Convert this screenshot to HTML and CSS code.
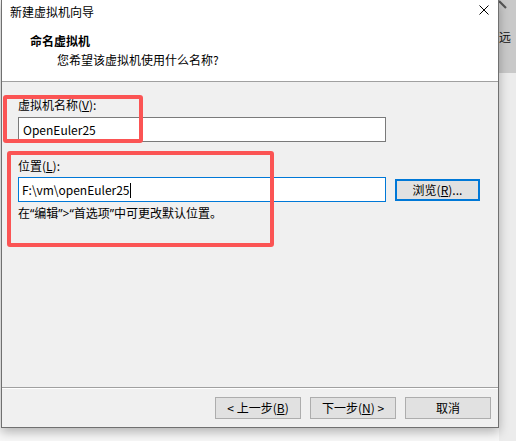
FILE: index.html
```html
<!DOCTYPE html>
<html lang="zh-CN">
<head>
<meta charset="utf-8">
<title>新建虚拟机向导</title>
<link rel="stylesheet" href="styles.css">
</head>
<body>
<div class="screen">
  <div class="dialog">
    <div class="header">
      <div class="titlebar">
        <span class="title">新建虚拟机向导</span>
        <svg class="close" width="10" height="10" viewBox="0 0 10 10"><path d="M0.5 0.5 L9.5 9.5 M9.5 0.5 L0.5 9.5" stroke="#000" stroke-width="1" fill="none"/></svg>
      </div>
      <div class="heading">命名虚拟机</div>
      <div class="subtitle">您希望该虚拟机使用什么名称?</div>
    </div>
    <div class="body">
      <div class="label">虚拟机名称(<u>V</u>):</div>
      <div class="field name-field">OpenEuler25</div>
      <div class="label label-loc">位置(<u>L</u>):</div>
      <div class="loc-row">
        <div class="field focused">F:\vm\openEuler25<span class="caret"></span></div>
        <div class="btn browse">浏览(<u>R</u>)...</div>
      </div>
      <div class="hint">在“编辑”&gt;“首选项”中可更改默认位置。</div>
    </div>
    <div class="separator"></div>
    <div class="footer">
      <div class="btn">&lt; 上一步(<u>B</u>)</div>
      <div class="btn">下一步(<u>N</u>) &gt;</div>
      <div class="btn">取消</div>
    </div>
    <div class="mark mark-name"></div>
    <div class="mark mark-loc"></div>
  </div>
  <div class="side">
    <div class="side-top">
      <svg class="side-icon" width="16" height="12" viewBox="0 0 16 12"><path d="M0 1 L7 8" stroke="#555" stroke-width="2.2" fill="none"/></svg>
      <span class="side-text">远</span>
    </div>
    <div class="side-bottom"></div>
  </div>
</div>
</body>
</html>
```
FILE: styles.css
```css
html, body {
  margin: 0;
  padding: 0;
}
body {
  width: 516px;
  height: 441px;
  overflow: hidden;
  background: #f7f7f7;
  font-family: "Noto Sans CJK SC", "Microsoft YaHei", sans-serif;
  font-size: 12px;
  color: #000;
}
.screen {
  display: flex;
  align-items: flex-start;
  height: 441px;
}
.dialog {
  position: relative;
  z-index: 1;
  margin-left: 1px;
  width: 497px;
  border: 1px solid #707070;
  border-top: none;
  background: #f0f0f0;
  box-shadow: 0 4px 10px rgba(0, 0, 0, 0.28);
}
.header {
  background: #fff;
  height: 81px;
  border-bottom: 1px solid #a0a0a0;
}
.titlebar {
  display: flex;
  justify-content: space-between;
  align-items: flex-start;
  height: 24px;
  padding-left: 8px;
}
.title {
  line-height: 24px;
}
.close {
  margin-top: 5px;
  margin-right: 9px;
}
.heading {
  margin-top: 9px;
  padding-left: 28px;
  font-weight: bold;
  line-height: 16px;
}
.subtitle {
  margin-top: 3px;
  padding-left: 55px;
  line-height: 16px;
}
.body {
  height: 290px;
  padding: 15px 0 0 16px;
}
.label {
  line-height: 16px;
  height: 16px;
}
.label-loc {
  margin-top: 16px;
}
.field {
  box-sizing: border-box;
  width: 368px;
  height: 25px;
  margin-top: 4px;
  border: 1px solid #7a7a7a;
  background: #fff;
  padding-left: 4px;
  line-height: 23px;
  white-space: nowrap;
}
.loc-row {
  display: flex;
  align-items: center;
  gap: 9px;
  margin-top: 3px;
}
.loc-row .field {
  margin-top: 0;
}
.focused {
  border-color: #0078d7;
  padding-left: 3px;
}
.caret {
  display: inline-block;
  width: 1px;
  height: 15px;
  background: #000;
  vertical-align: -3px;
}
.hint {
  margin-top: 4px;
  line-height: 16px;
  font-family: "Noto Sans", "Noto Sans CJK SC", sans-serif;
}
.btn {
  box-sizing: border-box;
  width: 86px;
  height: 22px;
  border: 1px solid #adadad;
  background: #e1e1e1;
  text-align: center;
  line-height: 20px;
  white-space: nowrap;
}
.browse {
  width: 85px;
  border: 2px solid #0078d7;
  line-height: 18px;
}
.separator {
  height: 1px;
  background: #a0a0a0;
  border-bottom: 1px solid #fff;
}
.footer {
  display: flex;
  justify-content: flex-end;
  gap: 9px;
  padding: 8px 7px 8px 0;
}
.mark {
  position: absolute;
  box-sizing: border-box;
  border: 4px solid #fb5454;
  border-radius: 3px;
}
.mark-name {
  left: 1px;
  top: 95px;
  width: 140px;
  height: 48px;
}
.mark-loc {
  left: 5px;
  top: 151px;
  width: 267px;
  height: 96px;
}
.side {
  width: 17px;
  display: flex;
  flex-direction: column;
  height: 441px;
}
.side-top {
  height: 73px;
  background: #c9c9c9;
  overflow: hidden;
  white-space: nowrap;
  display: flex;
  flex-direction: column;
}
.side-icon {
  display: block;
}
.side-text {
  margin-top: 17px;
  margin-left: 0;
  line-height: 16px;
  color: #111;
}
.side-bottom {
  flex: 1;
  background: #ececec;
}
```
